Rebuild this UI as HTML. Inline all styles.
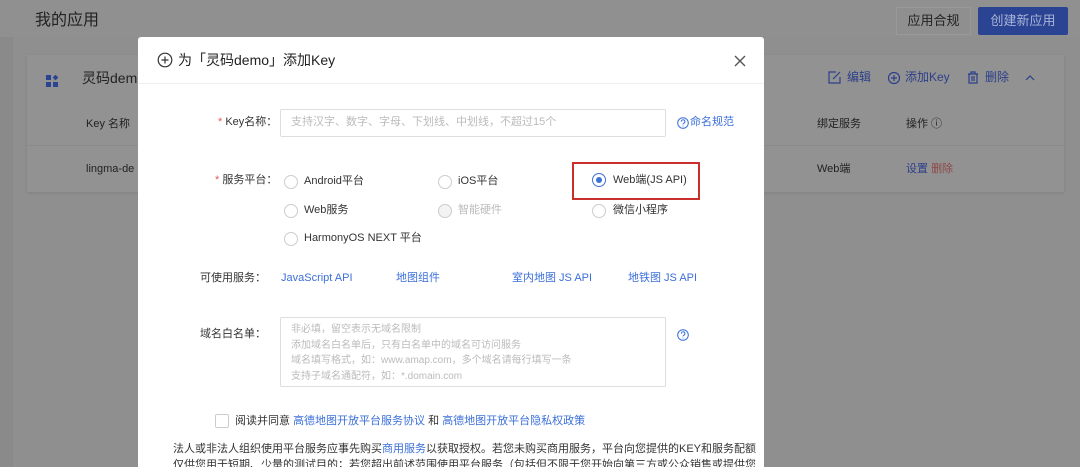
<!DOCTYPE html>
<html><head><meta charset="utf-8"><style>
*{margin:0;padding:0;box-sizing:border-box}
html,body{width:1080px;height:467px;overflow:hidden}
body{background:#8f8f8f;font-family:"Liberation Sans","Noto Sans CJK SC",sans-serif;position:relative;color:#333}
.a{position:absolute;white-space:nowrap;line-height:1.45}
.bl{color:#2c3f8a}
.lk{color:#3b6fd9}
.radio{position:absolute;width:14px;height:14px;border:1px solid #ccc;border-radius:50%;background:#fff}
</style></head><body>
<div class="a" style="left:0;top:0;width:13px;height:467px;background:#8a8a8a"></div>
<div class="a" style="left:0;top:0;width:1080px;height:37px;background:#909090"></div>
<div class="a" style="left:35px;top:9px;font-size:16px;color:#222">我的应用</div>
<div class="a" style="left:896px;top:7px;width:75px;height:28px;border:1px solid #999;background:#8f8f8f;font-size:13px;line-height:26px;text-align:center;color:#222">应用合规</div>
<div class="a" style="left:978px;top:7px;width:90px;height:28px;background:#2b4393;font-size:13px;line-height:28px;text-align:center;color:#a8b4d8;border-radius:2px">创建新应用</div>
<div class="a" style="left:27px;top:55px;width:1037px;height:137px;background:#929292;box-shadow:0 1px 3px rgba(0,0,0,.1)"></div>
<div class="a" style="left:27px;top:145px;width:1037px;height:1px;background:#8a8a8a"></div>
<div class="a" style="left:46px;top:72px;width:13px;height:13px"><svg width="13" height="13"><rect x="0" y="0" width="5" height="5" fill="#2b4393"/><rect x="0" y="7" width="5" height="5" fill="#2b4393"/><rect x="7" y="7" width="5" height="5" fill="#2b4393"/><rect x="7.5" y="0.5" width="4" height="4" fill="#2b4393" transform="rotate(45 9.5 2.5)"/></svg></div>
<div class="a" style="left:82px;top:68px;font-size:14px;color:#222">灵码dem</div>
<div class="a" style="left:86px;top:117px;font-size:11px;color:#222">Key 名称</div>
<div class="a" style="left:86px;top:162px;font-size:11px;color:#222">lingma-de</div>
<svg class="a" style="left:828px;top:71px" width="200" height="14" fill="none" stroke="#2c3f8a" stroke-width="1.2"><path d="M8 1H1v11h11V6M5 8l7-7"/><circle cx="66" cy="7" r="5.5"/><path d="M66 4v6M63 7h6"/><path d="M140 3h10M143 3V1h4v2M141 3v9h8V3M144 5v5M146 5v5"/></svg>
<div class="a bl" style="left:847px;top:69px;font-size:12px">编辑</div>
<div class="a bl" style="left:905px;top:69px;font-size:12px">添加Key</div>
<div class="a bl" style="left:985px;top:69px;font-size:12px">删除</div>
<svg class="a" style="left:1025px;top:74px" width="10" height="8" fill="none" stroke="#2c3f8a" stroke-width="1.2"><path d="M1 6l4-4 4 4"/></svg>
<div class="a" style="left:817px;top:117px;font-size:11px;color:#222">绑定服务</div>
<div class="a" style="left:906px;top:117px;font-size:11px;color:#222">操作 ⓘ</div>
<div class="a" style="left:817px;top:162px;font-size:11px;color:#222">Web端</div>
<div class="a" style="left:906px;top:162px;font-size:11px;color:#2c3f8a">设置 <span style="color:#8f4848">删除</span></div>

<div class="a" style="left:138px;top:37px;width:626px;height:430px;background:#fff;border-radius:3px 3px 0 0"></div>
<div class="a" style="left:138px;top:83px;width:626px;height:1px;background:#eee"></div>
<svg class="a" style="left:157px;top:52px" width="16" height="16" fill="none" stroke="#333" stroke-width="1.2"><circle cx="8" cy="8" r="6.8"/><path d="M8 4.5v7M4.5 8h7"/></svg>
<div class="a" style="left:178px;top:50px;font-size:14px;color:#222">为「灵码demo」添加Key</div>
<svg class="a" style="left:734px;top:55px" width="12" height="12" stroke="#555" stroke-width="1.4"><path d="M1 1l10 10M11 1L1 11"/></svg>

<div class="a" style="left:218px;top:115px;font-size:11px;color:#333"><span style="color:#e55">*</span> Key名称：</div>
<div class="a" style="left:280px;top:109px;width:386px;height:28px;border:1px solid #ddd;border-radius:2px;font-size:11px;color:#bbb;padding:5px 10px">支持汉字、数字、字母、下划线、中划线，不超过15个</div>
<svg class="a" style="left:677px;top:117px" width="12" height="12" fill="none" stroke="#3b6fd9" stroke-width="1"><circle cx="6" cy="6" r="5.3"/><path d="M4.3 4.6a1.8 1.8 0 1 1 2.4 1.7c-.5.2-.7.5-.7 1.1M6 8.6v.8"/></svg>
<div class="a lk" style="left:690px;top:115px;font-size:11px">命名规范</div>

<div class="a" style="left:215px;top:173px;font-size:11px;color:#333"><span style="color:#e55">*</span> 服务平台：</div>
<div class="radio" style="left:284px;top:175px"></div><div class="a" style="left:304px;top:174px;font-size:11px">Android平台</div>
<div class="radio" style="left:438px;top:175px"></div><div class="a" style="left:458px;top:174px;font-size:11px">iOS平台</div>
<div class="radio" style="left:592px;top:173px;border-color:#3b6fd9"><div style="position:absolute;left:3px;top:3px;width:6px;height:6px;border-radius:50%;background:#3b6fd9"></div></div>
<div class="a" style="left:613px;top:173px;font-size:11px">Web端(JS API)</div>
<div class="a" style="left:572px;top:162px;width:128px;height:38px;border:2.5px solid #c9302c"></div>
<div class="radio" style="left:284px;top:204px"></div><div class="a" style="left:304px;top:203px;font-size:11px">Web服务</div>
<div class="radio" style="left:438px;top:204px;background:#f3f3f3"></div><div class="a" style="left:458px;top:203px;font-size:11px;color:#bbb">智能硬件</div>
<div class="radio" style="left:592px;top:204px"></div><div class="a" style="left:613px;top:203px;font-size:11px">微信小程序</div>
<div class="radio" style="left:284px;top:232px"></div><div class="a" style="left:304px;top:231px;font-size:11px">HarmonyOS NEXT 平台</div>

<div class="a" style="left:200px;top:271px;font-size:11px">可使用服务：</div>
<div class="a lk" style="left:281px;top:271px;font-size:11px">JavaScript API</div>
<div class="a lk" style="left:396px;top:271px;font-size:11px">地图组件</div>
<div class="a lk" style="left:512px;top:271px;font-size:11px">室内地图 JS API</div>
<div class="a lk" style="left:628px;top:271px;font-size:11px">地铁图 JS API</div>

<div class="a" style="left:200px;top:327px;font-size:11px">域名白名单：</div>
<div class="a" style="left:280px;top:317px;width:386px;height:70px;border:1px solid #ddd;border-radius:2px;font-size:10px;color:#bbb;padding:4px 10px;line-height:15.5px;white-space:normal">非必填，留空表示无域名限制<br>添加域名白名单后，只有白名单中的域名可访问服务<br>域名填写格式，如：www.amap.com，多个域名请每行填写一条<br>支持子域名通配符，如：*.domain.com</div>
<svg class="a" style="left:677px;top:329px" width="12" height="12" fill="none" stroke="#3b6fd9" stroke-width="1"><circle cx="6" cy="6" r="5.3"/><path d="M4.3 4.6a1.8 1.8 0 1 1 2.4 1.7c-.5.2-.7.5-.7 1.1M6 8.6v.8"/></svg>

<div class="a" style="left:215px;top:414px;width:14px;height:14px;border:1px solid #ccc;border-radius:2px"></div>
<div class="a" style="left:235px;top:414px;font-size:11px">阅读并同意 <span class="lk">高德地图开放平台服务协议</span> 和 <span class="lk">高德地图开放平台隐私权政策</span></div>
<div class="a" style="left:173px;top:442px;font-size:11px">法人或非法人组织使用平台服务应事先购买<span class="lk">商用服务</span>以获取授权。若您未购买商用服务，平台向您提供的KEY和服务配额</div>
<div class="a" style="left:173px;top:458px;font-size:11px">仅供您用于短期、少量的测试目的；若您超出前述范围使用平台服务（包括但不限于您开始向第三方或公众销售或提供您</div>
</body></html>
